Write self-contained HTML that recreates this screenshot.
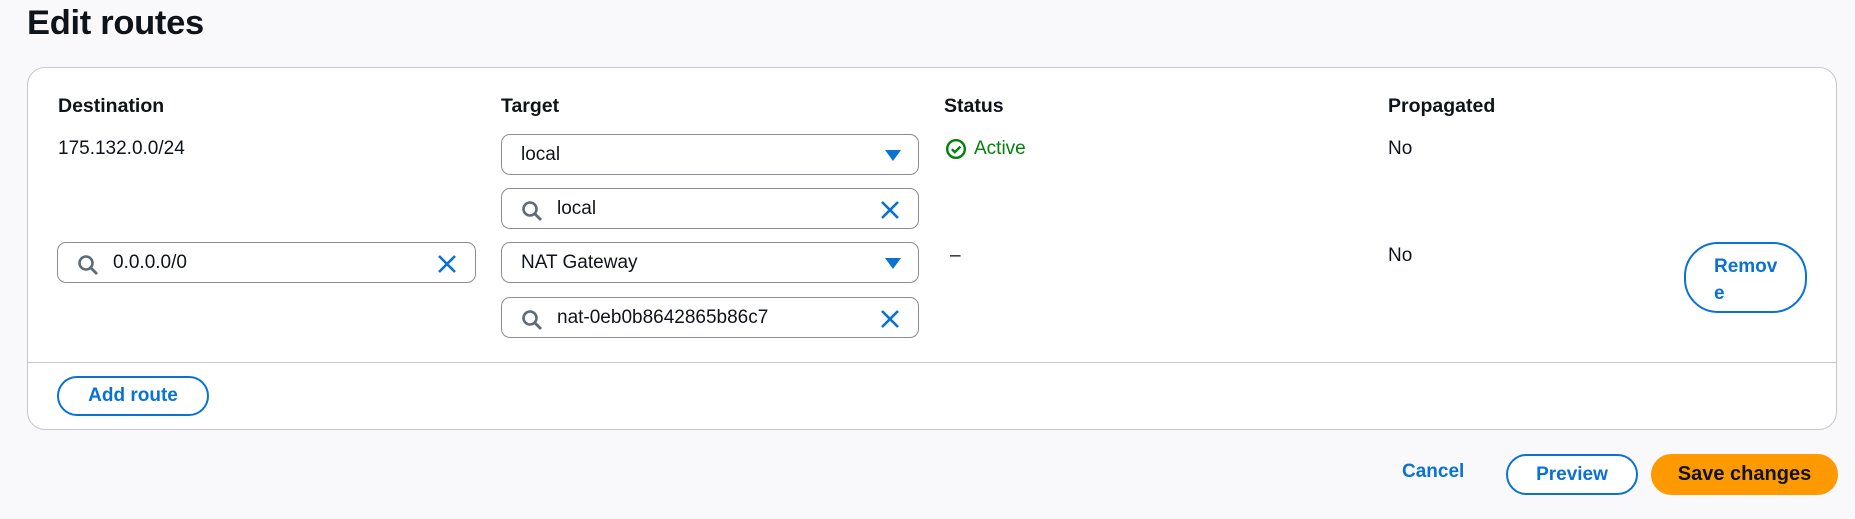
<!DOCTYPE html>
<html><head><style>
*{box-sizing:border-box;margin:0;padding:0}
body{width:1855px;height:519px;background:#f9f9fb;font-family:"Liberation Sans",sans-serif;color:#0f141a;position:relative;overflow:hidden;font-size:19px}
.a{position:absolute}
h1{position:absolute;left:27px;top:4px;font-size:34.5px;font-weight:bold;letter-spacing:-0.3px}
.card{position:absolute;left:27px;top:67px;width:1810px;height:363px;background:#fff;border:1px solid #c6c6cd;border-radius:18px}
.hd{font-weight:bold;font-size:19.5px}
.box{position:absolute;height:41px;border:1px solid #8c8c94;border-radius:9px;background:#fff}
.box .t{position:absolute;left:19px;top:9px;font-size:19px}
.box .ts{position:absolute;left:55px;top:9px;font-size:19px}
.mag{position:absolute;left:19px;top:11px}
.x{position:absolute;right:18px;top:11px}
.tri{position:absolute;right:17px;top:15px;width:0;height:0;border-left:8px solid transparent;border-right:8px solid transparent;border-top:11px solid #0972d3}
.btn{position:absolute;border:2px solid #0972d3;border-radius:22px;color:#0972d3;font-weight:bold;font-size:19px;text-align:center;background:#fff}
</style></head><body>
<h1>Edit routes</h1>
<div class="card"></div>
<div class="a hd" style="left:58px;top:95px">Destination</div>
<div class="a hd" style="left:501px;top:95px">Target</div>
<div class="a hd" style="left:944px;top:95px">Status</div>
<div class="a hd" style="left:1388px;top:95px">Propagated</div>
<div class="a" style="left:58px;top:138px">175.132.0.0/24</div>
<div class="a" style="left:945px;top:138px;color:#037f0c;display:flex;align-items:center">
<svg width="22" height="22" viewBox="0 0 22 22" style="margin-right:7px"><circle cx="11" cy="11" r="8.8" fill="none" stroke="#037f0c" stroke-width="2.4"/><path d="M6.8 11.2l3 3 5.6-5.6" fill="none" stroke="#037f0c" stroke-width="2.4"/></svg>Active</div>
<div class="a" style="left:1388px;top:138px">No</div>
<div class="a" style="left:950px;top:245px">–</div>
<div class="a" style="left:1388px;top:245px">No</div>

<div class="box" style="left:501px;top:134px;width:418px"><span class="t">local</span><div class="tri"></div></div>
<div class="box" style="left:501px;top:188px;width:418px">
<svg class="mag" width="22" height="22" viewBox="0 0 22 22"><circle cx="9" cy="9" r="6.5" fill="none" stroke="#5f6b7a" stroke-width="2.6"/><path d="M14 14l6 6" stroke="#5f6b7a" stroke-width="2.8"/></svg>
<span class="ts">local</span>
<svg class="x" width="20" height="20" viewBox="0 0 20 20"><path d="M2 2l16 16M18 2L2 18" stroke="#0972d3" stroke-width="2.6"/></svg></div>
<div class="box" style="left:501px;top:242px;width:418px"><span class="t">NAT Gateway</span><div class="tri"></div></div>
<div class="box" style="left:501px;top:297px;width:418px">
<svg class="mag" width="22" height="22" viewBox="0 0 22 22"><circle cx="9" cy="9" r="6.5" fill="none" stroke="#5f6b7a" stroke-width="2.6"/><path d="M14 14l6 6" stroke="#5f6b7a" stroke-width="2.8"/></svg>
<span class="ts">nat-0eb0b8642865b86c7</span>
<svg class="x" width="20" height="20" viewBox="0 0 20 20"><path d="M2 2l16 16M18 2L2 18" stroke="#0972d3" stroke-width="2.6"/></svg></div>
<div class="box" style="left:57px;top:242px;width:419px">
<svg class="mag" width="22" height="22" viewBox="0 0 22 22"><circle cx="9" cy="9" r="6.5" fill="none" stroke="#5f6b7a" stroke-width="2.6"/><path d="M14 14l6 6" stroke="#5f6b7a" stroke-width="2.8"/></svg>
<span class="ts">0.0.0.0/0</span>
<svg class="x" width="20" height="20" viewBox="0 0 20 20"><path d="M2 2l16 16M18 2L2 18" stroke="#0972d3" stroke-width="2.6"/></svg></div>

<div class="btn" style="left:1684px;top:242px;width:123px;height:71px;border-radius:34px;text-align:left;padding:9px 0 0 28px;line-height:27px">Remov<br>e</div>
<div class="a" style="left:28px;top:362px;width:1808px;height:1px;background:#c6c6cd"></div>
<div class="btn" style="left:57px;top:376px;width:152px;height:40px;line-height:36px">Add route</div>

<div class="a" style="left:1402px;top:461px;color:#0972d3;font-weight:bold">Cancel</div>
<div class="btn" style="left:1506px;top:454px;width:132px;height:41px;line-height:37px;background:#fff">Preview</div>
<div class="a" style="left:1651px;top:454px;width:187px;height:41px;border-radius:22px;background:#ff9900;color:#0f141a;font-weight:bold;font-size:20px;text-align:center;line-height:41px">Save changes</div>
</body></html>
